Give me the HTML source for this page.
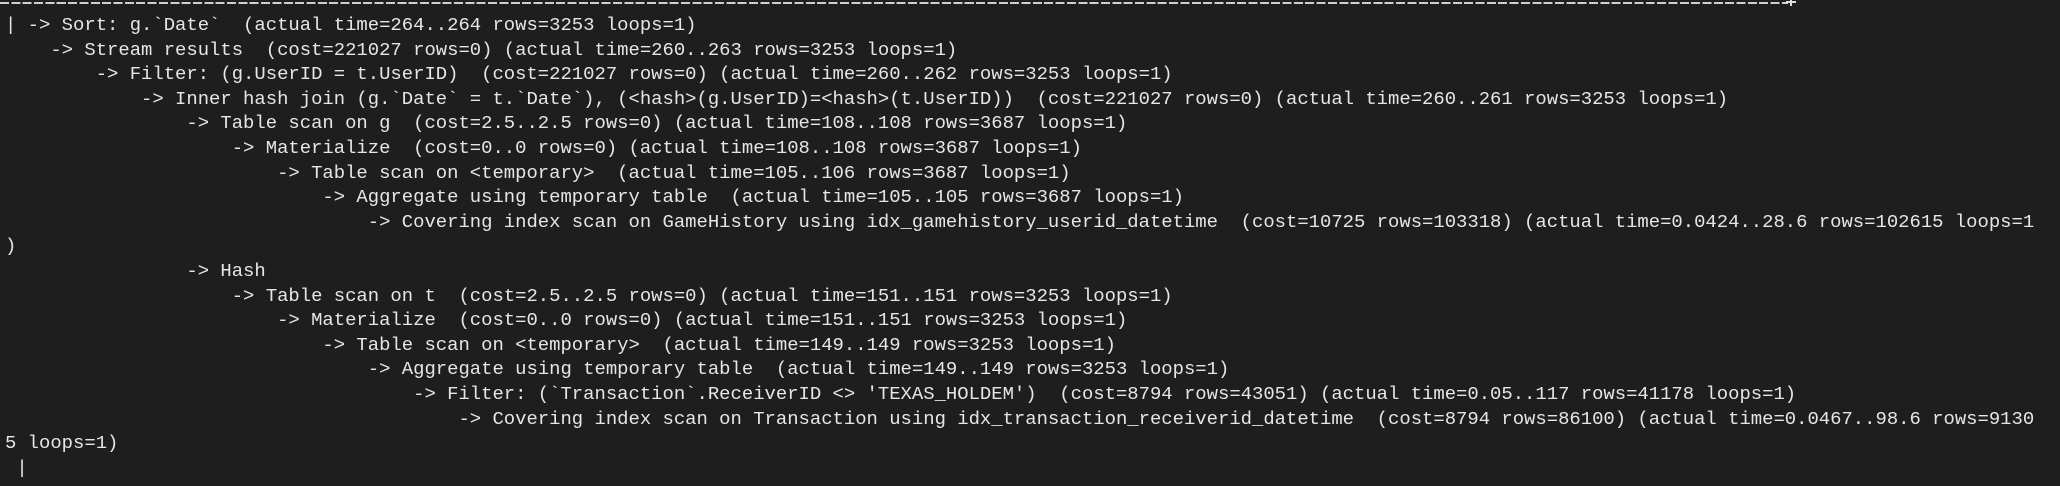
<!DOCTYPE html>
<html><head><meta charset="utf-8"><style>
html,body{margin:0;padding:0;background:#1e1e1e;width:2060px;height:486px;overflow:hidden}
pre{position:absolute;left:5px;top:13px;margin:0;font-family:"Liberation Mono",monospace;font-size:18.9px;line-height:24.6px;color:#e6e6e6;white-space:pre}
.dash{position:absolute;left:0;top:2px;width:1788px;height:2px;background:repeating-linear-gradient(90deg,#d0d0d0 0 9px,transparent 9px 11.35px)}
.plus{position:absolute;left:1786px;top:-2px;width:10px;height:10px}
.plus:before{content:"";position:absolute;left:4px;top:0;width:2px;height:8px;background:#ddd}
.plus:after{content:"";position:absolute;left:0;top:3px;width:10px;height:2px;background:#ddd}
</style></head><body>
<div class="dash"></div><div class="plus"></div>
<pre>| -&gt; Sort: g.`Date`  (actual time=264..264 rows=3253 loops=1)
    -&gt; Stream results  (cost=221027 rows=0) (actual time=260..263 rows=3253 loops=1)
        -&gt; Filter: (g.UserID = t.UserID)  (cost=221027 rows=0) (actual time=260..262 rows=3253 loops=1)
            -&gt; Inner hash join (g.`Date` = t.`Date`), (&lt;hash&gt;(g.UserID)=&lt;hash&gt;(t.UserID))  (cost=221027 rows=0) (actual time=260..261 rows=3253 loops=1)
                -&gt; Table scan on g  (cost=2.5..2.5 rows=0) (actual time=108..108 rows=3687 loops=1)
                    -&gt; Materialize  (cost=0..0 rows=0) (actual time=108..108 rows=3687 loops=1)
                        -&gt; Table scan on &lt;temporary&gt;  (actual time=105..106 rows=3687 loops=1)
                            -&gt; Aggregate using temporary table  (actual time=105..105 rows=3687 loops=1)
                                -&gt; Covering index scan on GameHistory using idx_gamehistory_userid_datetime  (cost=10725 rows=103318) (actual time=0.0424..28.6 rows=102615 loops=1
)
                -&gt; Hash
                    -&gt; Table scan on t  (cost=2.5..2.5 rows=0) (actual time=151..151 rows=3253 loops=1)
                        -&gt; Materialize  (cost=0..0 rows=0) (actual time=151..151 rows=3253 loops=1)
                            -&gt; Table scan on &lt;temporary&gt;  (actual time=149..149 rows=3253 loops=1)
                                -&gt; Aggregate using temporary table  (actual time=149..149 rows=3253 loops=1)
                                    -&gt; Filter: (`Transaction`.ReceiverID &lt;&gt; 'TEXAS_HOLDEM')  (cost=8794 rows=43051) (actual time=0.05..117 rows=41178 loops=1)
                                        -&gt; Covering index scan on Transaction using idx_transaction_receiverid_datetime  (cost=8794 rows=86100) (actual time=0.0467..98.6 rows=9130
5 loops=1)
 |</pre>
</body></html>
